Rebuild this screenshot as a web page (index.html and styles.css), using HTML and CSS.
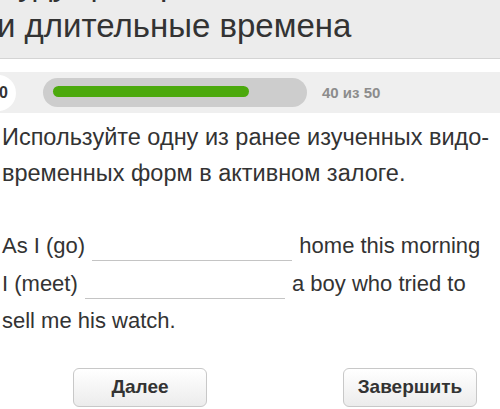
FILE: index.html
```html
<!DOCTYPE html>
<html lang="ru">

<head>
    <meta charset="utf-8">
    <title>Тест</title>
    <link rel="stylesheet" href="styles.css">
</head>

<body>
    <header class="title-bar">
        <h1>Будущие простые<br>и длительные времена</h1>
    </header>

    <div class="progress">
        <div class="progress-num">0</div>
        <div class="progress-track">
            <div class="progress-fill" style="width: 196px;"></div>
        </div>
        <div class="progress-count">40 из 50</div>
    </div>

    <main class="task">
        <p class="task-text">Используйте одну из ранее изученных видо-<br>временных форм в активном залоге.</p>
        <p class="task-sentence">
            As I (go) <span class="blank blank-go"></span> home this morning<br>
            I (meet) <span class="blank blank-meet"></span> a boy who tried to<br>
            sell me his watch.
        </p>
    </main>

    <footer class="actions">
        <button class="btn">Далее</button>
        <button class="btn">Завершить</button>
    </footer>
</body>

</html>
```

FILE: styles.css
```css
:root {
    --text-color: #333;
    --band-color: #efefef;
    --track-color: #cdcdcd;
    --green-color: #4ba90c;
    --muted-color: #8c8c8c;
}

* {
    margin: 0;
    padding: 0;
    box-sizing: border-box;
}

body {
    font-family: 'Liberation Sans', Arial, sans-serif;
    color: var(--text-color);
    background: #fff;
    width: 500px;
    height: 409px;
    overflow: hidden;
}

.title-bar {
    height: 59px;
    background: #ececec;
    border-bottom: 1px solid #d4d4d4;
    overflow: hidden;
    display: flex;
    flex-direction: column;
    justify-content: flex-end;
}

.title-bar h1 {
    font-size: 33px;
    font-weight: normal;
    line-height: 42px;
    margin: 0 0 11px -3px;
    white-space: nowrap;
}

.progress {
    margin-top: 13px;
    height: 41px;
    background: var(--band-color);
    display: flex;
    align-items: center;
}

.progress-num {
    width: 36px;
    height: 36px;
    margin-left: -20px;
    border-radius: 50%;
    background: #fff;
    font-size: 16px;
    font-weight: bold;
    display: flex;
    align-items: center;
    justify-content: flex-end;
    padding-right: 8px;
}

.progress-track {
    margin-left: 27px;
    width: 264px;
    height: 29px;
    border-radius: 15px;
    background: var(--track-color);
    padding: 8px 10px;
}

.progress-fill {
    height: 11px;
    border-radius: 6px;
    background: var(--green-color);
}

.progress-count {
    margin-left: 15px;
    font-size: 15px;
    font-weight: bold;
    color: var(--muted-color);
}

.task {
    padding: 6px 0 0 2px;
    white-space: nowrap;
}

.task-text {
    font-size: 23.5px;
    line-height: 36px;
    margin-bottom: 36px;
}

.task-sentence {
    font-size: 22px;
    line-height: 37.5px;
}

.blank {
    display: inline-block;
    height: 20px;
    width: 200px;
    border-bottom: 1px solid #c4c4c4;
    vertical-align: -8px;
    margin: 0 1px;
}

.actions {
    margin-top: 28px;
    display: flex;
    padding-left: 73px;
    gap: 136px;
}

.btn {
    width: 134px;
    height: 39px;
    font-family: 'Liberation Sans', Arial, sans-serif;
    font-size: 19px;
    font-weight: bold;
    color: var(--text-color);
    background: linear-gradient(#fff, #ececec);
    border: 1px solid #c8c8c8;
    border-radius: 6px;
}
```
